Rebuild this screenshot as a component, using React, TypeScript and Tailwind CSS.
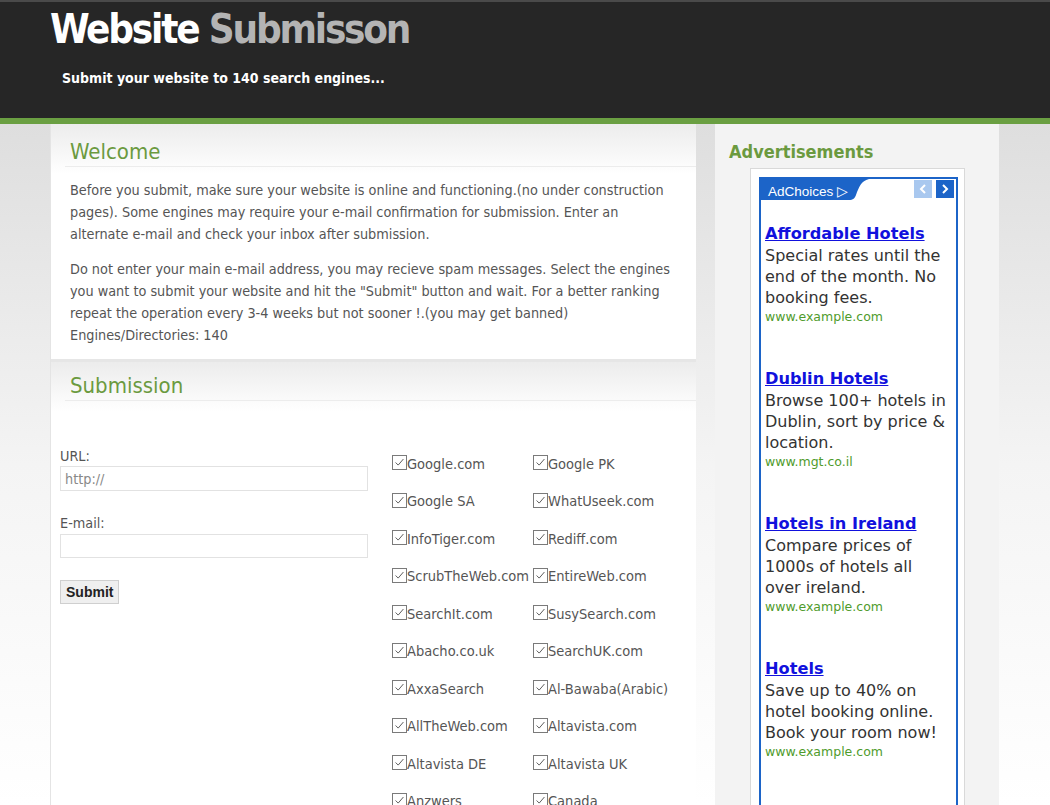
import React from "react";

const ENGINES = [
  "Google.com", "Google PK",
  "Google SA", "WhatUseek.com",
  "InfoTiger.com", "Rediff.com",
  "ScrubTheWeb.com", "EntireWeb.com",
  "SearchIt.com", "SusySearch.com",
  "Abacho.co.uk", "SearchUK.com",
  "AxxaSearch", "Al-Bawaba(Arabic)",
  "AllTheWeb.com", "Altavista.com",
  "Altavista DE", "Altavista UK",
  "Anzwers", "Canada",
];

const ADS = [
  { title: "Affordable Hotels", lines: ["Special rates until the", "end of the month. No", "booking fees."], url: "www.example.com" },
  { title: "Dublin Hotels", lines: ["Browse 100+ hotels in", "Dublin, sort by price &", "location."], url: "www.mgt.co.il" },
  { title: "Hotels in Ireland", lines: ["Compare prices of", "1000s of hotels all", "over ireland."], url: "www.example.com" },
  { title: "Hotels", lines: ["Save up to 40% on", "hotel booking online.", "Book your room now!"], url: "www.example.com" },
  { title: "Hotel Deals", lines: ["Find great deals on", "hotels worldwide."], url: "www.example.com" },
];

const body = { fontFamily: '"DejaVu Sans Condensed", "DejaVu Sans", sans-serif' };
const verdana = { fontFamily: '"DejaVu Sans", Verdana, sans-serif' };

function CheckBox() {
  return (
    <span className="inline-block w-[15px] h-[15px] border border-[#7a7a7a] bg-white shrink-0 relative -top-[2px]">
      <svg viewBox="0 0 15 15" className="w-full h-full">
        <path d="M3 7.5 L6 10.5 L12 3.5" fill="none" stroke="#555" strokeWidth="1.1" />
      </svg>
    </span>
  );
}

export default function App() {
  return (
    <div className="w-[1050px] h-[805px] overflow-hidden bg-white" style={body}>
      {/* header */}
      <div className="h-[118px] bg-[#262626] border-t-2 border-[#4a4a4a] pl-[50px]">
        <h1 className="text-[40px] font-bold leading-[52px] tracking-[-2.2px] pt-[1px]">
          <span className="text-white">Website</span> <span className="text-[#b4b4b4]">Submisson</span>
        </h1>
        <p className="mt-[13px] ml-[12px] text-[14px] font-bold text-white">Submit your website to 140 search engines...</p>
      </div>
      <div className="h-[6px] bg-[#6a9f42]" />

      <div className="bg-gradient-to-b from-[#dedede] via-[#f4f4f4] to-white h-[681px] flex pl-[50px] gap-[19px]">
        {/* main column */}
        <div className="w-[646px] border-l border-[#e4e4e4]">
          <section className="bg-gradient-to-b from-[#ececec] to-white to-[50px] bg-white pb-[13px]">
            <div className="pl-[14px]">
              <h2 className="pt-[14px] pl-[5px] text-[22px] leading-[28px] text-[#6b9a3f] border-b border-[#ececec]">Welcome</h2>
            </div>
            <div className="px-[19px] mt-[12px] text-[14.3px] leading-[22px] text-[#555]">
              <p>
                Before you submit, make sure your website is online and functioning.(no under construction pages). Some engines may require your e-mail confirmation for submission. Enter an alternate e-mail and check your inbox after submission.
              </p>
              <p className="mt-[13px]">
                Do not enter your main e-mail address, you may recieve spam messages. Select the engines you want to submit your website and hit the "Submit" button and wait. For a better ranking repeat the operation every 3-4 weeks but not sooner !.(you may get banned)
                <br />
                Engines/Directories: 140
              </p>
            </div>
          </section>
          <div className="h-[3px] bg-[#e6e6e6]" />
          <section className="bg-gradient-to-b from-[#ececec] to-white to-[50px] bg-white h-[450px]">
            <div className="pl-[14px]">
              <h2 className="pt-[10px] pl-[5px] text-[22px] leading-[28px] text-[#6b9a3f] border-b border-[#ececec]">Submission</h2>
            </div>
            <div className="flex pt-[46px]">
              <div className="w-[341px] pl-[9px] text-[14.3px] text-[#555]">
                <label className="block leading-[18px]">URL:</label>
                <input
                  defaultValue=""
                  placeholder="http://"
                  className="mt-[1px] w-[308px] h-[25px] border border-[#e2e2e2] px-[4px] text-[14.3px] text-[#777] placeholder:text-[#888] outline-none"
                />
                <label className="block leading-[18px] mt-[23px]">E-mail:</label>
                <input className="mt-[2px] w-[308px] h-[24px] border border-[#e2e2e2] outline-none" />
                <button
                  className="block mt-[22px] h-[24px] px-[5px] bg-[#efefef] border border-[#cfcfcf] text-[14px] font-bold text-[#222]"
                  style={{ fontFamily: '"Liberation Sans", Arial, sans-serif' }}
                >
                  Submit
                </button>
              </div>
              <div className="grid grid-cols-[141px_140px] -mt-[1px] text-[14.5px] text-[#555]">
                {ENGINES.map((e) => (
                  <div key={e} className="flex items-center h-[37.5px] whitespace-nowrap">
                    <CheckBox />
                    <span>{e}</span>
                  </div>
                ))}
              </div>
            </div>
          </section>
        </div>

        {/* sidebar */}
        <div className="w-[284px] bg-[#f3f3f3] pl-[14px]">
          <h3 className="pt-[16px] text-[18px] font-bold leading-[24px] text-[#6b9a3f]">Advertisements</h3>
          <div className="ml-[21px] mt-[4px] w-[215px] h-[700px] border border-[#d9d9d9] bg-white pt-[8px] pl-[8px]">
            <div className="w-[199px] h-[700px] border-2 border-[#1c64c8] bg-white" style={verdana}>
              <div className="flex items-start justify-between h-[22px]">
                <div className="relative h-[21px] w-[108px]">
                  <svg viewBox="0 0 108 21" className="absolute inset-0 w-full h-full" preserveAspectRatio="none">
                    <path d="M0 0 H108 C100 2 98 8 95 16 C94 19 92 21 88 21 H0 Z" fill="#1c64c8" />
                  </svg>
                  <span className="relative pl-[7px] text-[13.5px] leading-[21px] text-white" style={{ fontFamily: '"Liberation Sans", Arial, sans-serif' }}>
                    AdChoices ▷
                  </span>
                </div>
                <div className="flex gap-[4px] pt-[1px] pr-[2px]">
                  <span className="w-[18px] h-[18px] bg-[#a9c8ef] text-white flex items-center justify-center">
                    <svg viewBox="0 0 10 10" className="w-[10px] h-[10px]"><path d="M7 1 L3 5 L7 9" fill="none" stroke="white" strokeWidth="2" /></svg>
                  </span>
                  <span className="w-[18px] h-[18px] bg-[#1c64c8] flex items-center justify-center">
                    <svg viewBox="0 0 10 10" className="w-[10px] h-[10px]"><path d="M3 1 L7 5 L3 9" fill="none" stroke="white" strokeWidth="2" /></svg>
                  </span>
                </div>
              </div>
              <div className="pl-[4px] pt-[22px]">
                {ADS.map((a) => (
                  <div key={a.title} className="h-[145px]">
                    <a className="block text-[16.2px] font-bold leading-[22px] text-[#1111dd] underline">{a.title}</a>
                    {a.lines.map((l) => (
                      <div key={l} className="text-[16px] leading-[21px] text-[#333] whitespace-nowrap">{l}</div>
                    ))}
                    <div className="text-[12.5px] leading-[17px] text-[#4f9b2c]">{a.url}</div>
                  </div>
                ))}
              </div>
            </div>
          </div>
        </div>
      </div>
    </div>
  );
}
